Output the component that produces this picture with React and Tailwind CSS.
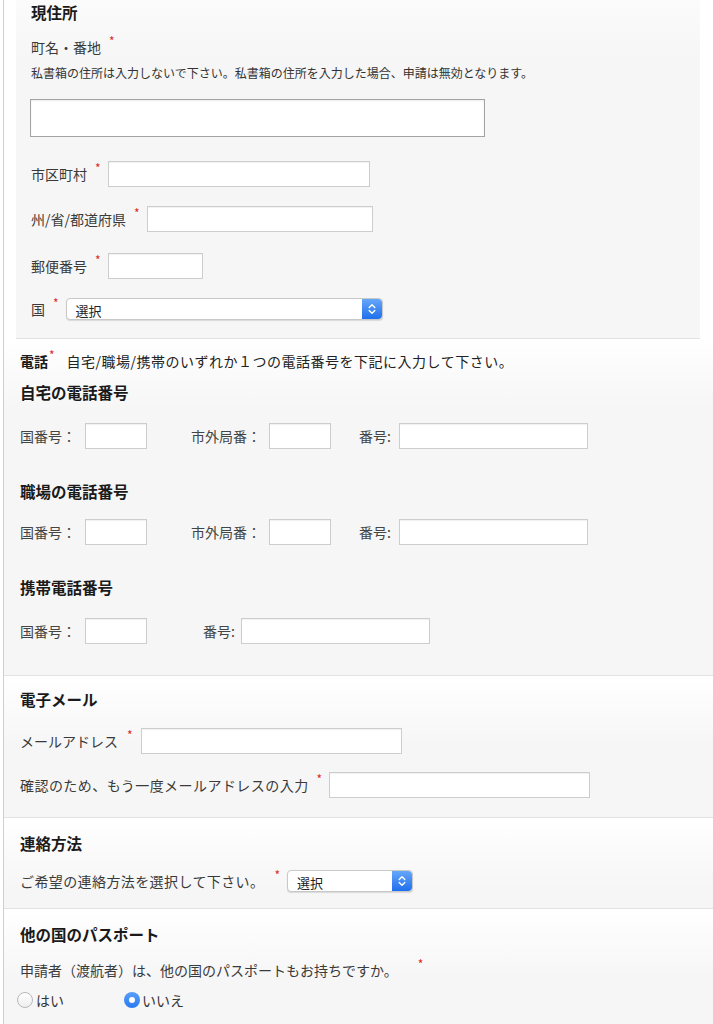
import React from 'react';

const FONT = { fontFamily: '"Noto Sans CJK JP", "Noto Sans", sans-serif' };

const Req = ({ className = 'ml-[8px] mr-[7px]' }) => (
  <span className={`relative -top-[6px] text-[12px] leading-none text-[#dd2a1f] ${className}`}>*</span>
);

const Field = ({ w, h = 'h-[26px]' }) => (
  <input
    type="text"
    className={`${w} ${h} border border-[#cdcdcd] bg-white shadow-[inset_0_1px_1px_rgba(0,0,0,0.06)] outline-none`}
  />
);

const Stepper = () => (
  <div className="flex w-[20px] items-center justify-center self-stretch rounded-r-[4px] bg-[linear-gradient(#66a7f8,#1f6fee)]">
    <svg width="8" height="12" viewBox="0 0 8 12" fill="none" stroke="white" strokeWidth="1.4" strokeLinecap="round" strokeLinejoin="round">
      <path d="M1.2 4.6 L4 1.8 L6.8 4.6" />
      <path d="M1.2 7.4 L4 10.2 L6.8 7.4" />
    </svg>
  </div>
);

const Select = ({ w }) => (
  <div className={`${w} flex h-[22px] items-stretch rounded-[4px] border border-[#c8c8c8] bg-white shadow-[0_1px_1px_rgba(0,0,0,0.12)]`}>
    <span className="flex-1 pl-[9px] pt-[3px] text-[13px] leading-[18px] text-[#222]">選択</span>
    <Stepper />
  </div>
);

const Heading = ({ children, className = '' }) => (
  <div className={`text-[15.5px] font-bold leading-[20px] text-[#1a1a1a] ${className}`}>{children}</div>
);

const Label = ({ children, className = '' }) => (
  <span className={`text-[14px] leading-[20px] text-[#3a3a3a] ${className}`}>{children}</span>
);

const PhoneRow = ({ mobile = false, className = '' }) => (
  <div className={`flex h-[26px] items-center text-[14px] text-[#444] ${className}`}>
    <span>国番号：</span>
    <div className="ml-[9px]"><Field w="w-[62px]" /></div>
    {!mobile && (
      <>
        <span className="ml-[44px]">市外局番：</span>
        <div className="ml-[8px]"><Field w="w-[62px]" /></div>
        <span className="ml-[28px]">番号:</span>
        <div className="ml-[8px]"><Field w="w-[189px]" /></div>
      </>
    )}
    {mobile && (
      <>
        <span className="ml-[56px]">番号:</span>
        <div className="ml-[6px]"><Field w="w-[189px]" /></div>
      </>
    )}
  </div>
);

const sectionBg = 'bg-[linear-gradient(#ffffff,#f6f6f6_70px)]';

export default function App() {
  return (
    <div className="min-h-screen bg-white" style={FONT}>
      <div className="ml-[3px] min-h-[1024px] border-l border-[#cfcfcf]">
        {/* 現住所 */}
        <div className="ml-3 mr-[13px]">
          <div className="border-b border-[#e2e2e2] bg-[linear-gradient(#fbfbfb,#f6f6f6_60px)] pb-[18px] pl-[15px] pt-[2px]">
            <Heading>現住所</Heading>
            <div className="mt-[15px] flex items-center">
              <Label>町名・番地</Label>
              <Req />
            </div>
            <div className="mt-[8px] text-[12px] leading-[16px] text-[#333]">
              私書箱の住所は入力しないで下さい。私書箱の住所を入力した場合、申請は無効となります。
            </div>
            <input
              type="text"
              className="-ml-px mt-[18px] block h-[38px] w-[455px] border border-[#a3a3a3] bg-white shadow-[inset_0_1px_2px_rgba(0,0,0,0.08)] outline-none"
            />
            <div className="mt-[24px] flex h-[26px] items-center">
              <Label>市区町村</Label>
              <Req />
              <Field w="w-[262px]" />
            </div>
            <div className="mt-[19px] flex h-[26px] items-center">
              <Label>州/省/都道府県</Label>
              <Req />
              <Field w="w-[226px]" />
            </div>
            <div className="mt-[21px] flex h-[26px] items-center">
              <Label>郵便番号</Label>
              <Req />
              <Field w="w-[95px]" />
            </div>
            <div className="mt-[19px] flex h-[22px] items-center">
              <Label>国</Label>
              <Req />
              <Select w="w-[317px]" />
            </div>
          </div>
        </div>

        {/* 電話 */}
        <div className={`border-b border-[#e2e2e2] ${sectionBg} pb-[31px] pl-4 pt-[12px]`}>
          <div className="flex items-center leading-[20px]">
            <span className="text-[14px] font-bold text-[#1a1a1a]">電話</span>
            <span className="relative -top-[6px] ml-[1px] text-[12px] leading-none text-[#dd2a1f]">*</span>
            <span className="ml-[12px] text-[14px] tracking-[0.5px] text-[#222]">
              自宅/職場/携帯のいずれか１つの電話番号を下記に入力して下さい。
            </span>
          </div>
          <Heading className="mt-[11px]">自宅の電話番号</Heading>
          <PhoneRow className="mt-[21px]" />
          <Heading className="mt-[32px]">職場の電話番号</Heading>
          <PhoneRow className="mt-[18px]" />
          <Heading className="mt-[32px]">携帯電話番号</Heading>
          <PhoneRow mobile className="mt-[21px]" />
        </div>

        {/* 電子メール */}
        <div className={`border-b border-[#e2e2e2] ${sectionBg} pb-[19px] pl-4 pt-[13px]`}>
          <Heading>電子メール</Heading>
          <div className="mt-[19px] flex h-[26px] items-center">
            <Label>メールアドレス</Label>
            <Req className="ml-[9px] mr-[8px]" />
            <Field w="w-[261px]" />
          </div>
          <div className="mt-[18px] flex h-[26px] items-center">
            <Label className="tracking-[0.45px]">確認のため、もう一度メールアドレスの入力</Label>
            <Req className="ml-[8px] mr-[7px]" />
            <Field w="w-[261px]" />
          </div>
        </div>

        {/* 連絡方法 */}
        <div className={`border-b border-[#e2e2e2] ${sectionBg} pb-[16px] pl-4 pt-[15px]`}>
          <Heading>連絡方法</Heading>
          <div className="mt-[17px] flex h-[22px] items-center">
            <Label className="tracking-[0.4px]">ご希望の連絡方法を選択して下さい。</Label>
            <Req className="ml-[10px] mr-[7px]" />
            <Select w="w-[126px]" />
          </div>
        </div>

        {/* 他の国のパスポート */}
        <div className={`${sectionBg} pb-[20px] pl-4 pt-[15px]`}>
          <Heading>他の国のパスポート</Heading>
          <div className="mt-[16px] flex items-center">
            <Label>申請者（渡航者）は、他の国のパスポートもお持ちですか。</Label>
            <Req className="ml-[20px]" />
          </div>
          <div className="-ml-[3px] mt-[10px] flex h-[20px] items-center text-[14px] text-[#333]">
            <span className="h-[16px] w-[16px] rounded-full border border-[#b9b9b9] bg-[linear-gradient(#ffffff,#eeeeee)]" />
            <span className="ml-[3px]">はい</span>
            <span className="ml-[60px] flex h-[16px] w-[16px] items-center justify-center rounded-full bg-[linear-gradient(#5a9ff8,#2a79f0)]">
              <span className="h-[6px] w-[6px] rounded-full bg-white" />
            </span>
            <span className="ml-[2px]">いいえ</span>
          </div>
        </div>
      </div>
    </div>
  );
}
